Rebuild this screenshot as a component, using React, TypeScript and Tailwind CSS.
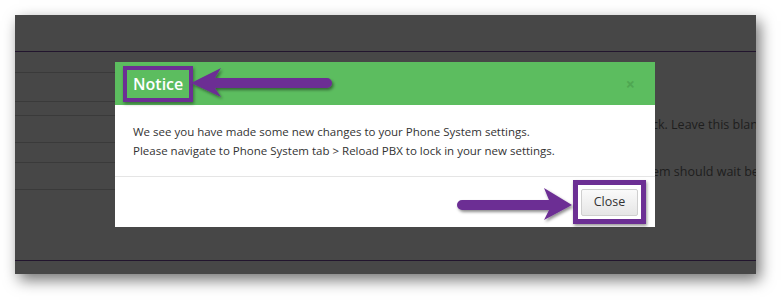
import React from 'react';

const font = { fontFamily: '"Open Sans", "Noto Sans", sans-serif' };

function ArrowLeft() {
  return (
    <svg width="150" height="40" viewBox="0 0 150 40" className="absolute left-[190px] top-[63px] overflow-visible">
      <defs>
        <filter id="sh1" x="-10%" y="-30%" width="130%" height="180%">
          <feDropShadow dx="1.5" dy="2" stdDeviation="1.5" floodColor="#000" floodOpacity="0.45" />
        </filter>
      </defs>
      <g filter="url(#sh1)" fill="#6c2f94">
        <path d="M1 20 L31 5 L25 15 L137 15 A5 5 0 0 1 137 25 L25 25 L31 34 Z" />
      </g>
    </svg>
  );
}

function ArrowRight() {
  return (
    <svg width="125" height="40" viewBox="0 0 125 40" className="absolute left-[450px] top-[185px] overflow-visible">
      <defs>
        <filter id="sh2" x="-10%" y="-30%" width="130%" height="180%">
          <feDropShadow dx="1.5" dy="2" stdDeviation="1.5" floodColor="#000" floodOpacity="0.45" />
        </filter>
      </defs>
      <g filter="url(#sh2)" fill="#6c2f94">
        <path d="M122 20 L94 3 L99 15 L12 15 A5 5 0 0 0 12 25 L99 25 L94 35 Z" />
      </g>
    </svg>
  );
}

export default function App() {
  return (
    <div className="relative w-[781px] h-[300px] bg-white overflow-hidden" style={font}>
      {/* background page */}
      <div className="absolute left-[15px] top-[15px] w-[741px] h-[259px] bg-[#474747] shadow-[4px_6px_14px_rgba(0,0,0,0.55)] overflow-hidden flex flex-col">
        <div className="h-[37px] border-b border-[#22152e] shrink-0" />
        <div className="flex-1 flex min-h-0">
          <div className="w-[200px] shrink-0 flex flex-col">
            <div className="h-[21px] border-b border-[#3a3a3a]" />
            <div className="h-[29px] border-b border-[#3a3a3a]" />
            <div className="h-[14px] border-b border-[#3a3a3a]" />
            <div className="h-[27px] border-b border-[#3a3a3a]" />
            <div className="h-[20px] border-b border-[#3a3a3a]" />
            <div className="h-[27px] border-b border-[#3a3a3a]" />
          </div>
          <div className="flex-1 min-w-0 overflow-hidden flex flex-col text-[12.5px] text-[#1e1e1e] whitespace-nowrap">
            <div className="h-[64px]" />
            <div className="pl-[437px] leading-[18px]">ck. Leave this blank to use the default.</div>
            <div className="h-[29px]" />
            <div className="pl-[437px] leading-[18px]">em should wait before retrying.</div>
          </div>
        </div>
        <div className="h-[14px] border-t border-[#22152e] shrink-0" />
      </div>

      {/* modal */}
      <div className="absolute left-[115px] top-[62px] w-[540px] bg-white flex flex-col">
        <div className="h-[43px] bg-[#5cbd5f] flex items-center pl-[8px] pr-[20px]">
          <div className="border-[4px] border-[#6c2f94] px-[6px] h-[36px] flex items-center shadow-[1px_2px_3px_rgba(0,0,0,0.4)]">
            <span className="text-white text-[16px] font-semibold">Notice</span>
          </div>
          <span className="ml-auto text-[#4fa752] text-[16px] font-bold leading-none">×</span>
        </div>
        <div className="h-[71px] px-[18px] pt-[17px] text-[11.5px] leading-[19px] text-[#333]">
          <p>We see you have made some new changes to your Phone System settings.</p>
          <p>Please navigate to Phone System tab &gt; Reload PBX to lock in your new settings.</p>
        </div>
        <div className="h-[51px] border-t border-[#e5e5e5] flex items-center justify-end pr-[9px]">
          <div className="border-[5px] border-[#6c2f94] p-[3px] bg-white shadow-[1px_2px_3px_rgba(0,0,0,0.4)]">
            <button className="w-[57px] h-[27px] border border-[#cfcfcf] rounded-[2px] bg-gradient-to-b from-[#fafafa] to-[#e6e6e6] text-[12.5px] text-[#333]">
              Close
            </button>
          </div>
        </div>
      </div>

      <ArrowLeft />
      <ArrowRight />
    </div>
  );
}
